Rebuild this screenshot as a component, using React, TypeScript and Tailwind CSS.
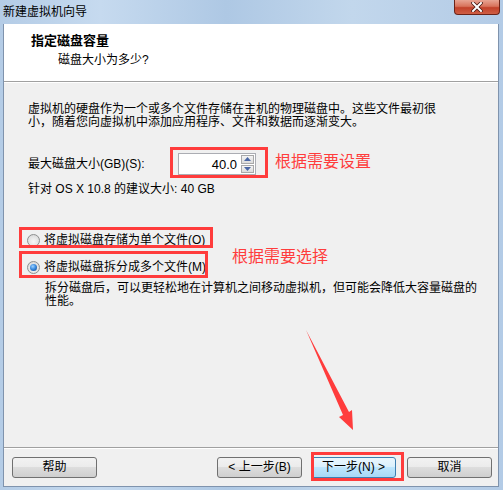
import React from "react";

const FONT = '"Liberation Sans", "Noto Sans CJK SC", sans-serif';

function Btn({ label, primary, className }: { label: string; primary?: boolean; className?: string }) {
  return (
    <div
      className={
        "h-[21px] w-[85px] rounded-[3px] border flex items-center justify-center text-[12px] leading-[13px] text-black " +
        (primary
          ? "border-[#3c7fb1] bg-[linear-gradient(to_bottom,#eaf6fd_0%,#d9f0fc_50%,#bee6fd_50%,#a7d9f5_100%)] "
          : "border-[#707070] bg-[linear-gradient(to_bottom,#f2f2f2_0%,#ebebeb_50%,#dddddd_50%,#cfcfcf_100%)] ") +
        (className ?? "")
      }
    >
      {label}
    </div>
  );
}

function Radio({ checked }: { checked?: boolean }) {
  return (
    <div className="w-[13px] h-[13px] rounded-full border border-[#8e8f8f] bg-[radial-gradient(circle_at_50%_60%,#f8f8f8_0%,#e2e2e2_60%,#cfcfcf_100%)] flex items-center justify-center shrink-0">
      {checked && (
        <div className="w-[7px] h-[7px] rounded-full bg-[radial-gradient(circle_at_40%_35%,#9fd2ff_0%,#3c8ce0_45%,#0d3d82_100%)]" />
      )}
    </div>
  );
}

export default function App() {
  return (
    <div
      className="relative w-[503px] h-[490px] overflow-hidden flex flex-col bg-[linear-gradient(to_right,#b4cce6,#c6daef_20%,#aec8e4_45%,#c2d7ec_70%,#b3cbe6)]"
      style={{ fontFamily: FONT }}
    >
      {/* Title bar */}
      <div className="h-[24px] flex items-start shrink-0">
        <div className="pl-[3px] pt-[5px] text-[12px] leading-[14px] text-black">新建虚拟机向导</div>
        <div className="ml-auto mr-[3px] w-[46px] h-[15px] rounded-b-[4px] border border-t-0 border-[#6b2318] bg-[linear-gradient(to_bottom,#e8a493_0%,#d8735c_45%,#c2412a_55%,#cf5f45_100%)] flex items-center justify-center">
          <svg width="12" height="10" viewBox="0 0 12 10">
            <path d="M2 1 L10 9 M10 1 L2 9" stroke="#4a1a12" strokeWidth="3.6" strokeLinecap="square" />
            <path d="M2 1 L10 9 M10 1 L2 9" stroke="#ffffff" strokeWidth="2" strokeLinecap="square" />
          </svg>
        </div>
      </div>

      {/* Client area */}
      <div className="flex-1 flex flex-col ml-[3px] mr-[4px] mb-[3px] border-l border-r border-[#7f93ad]">
        {/* Header */}
        <div className="h-[57px] bg-white pl-[27px] pt-[9px] shrink-0">
          <div className="text-[13px] leading-[16px] font-bold text-black">指定磁盘容量</div>
          <div className="mt-[3px] ml-[27px] text-[12px] leading-[16px] text-black">磁盘大小为多少?</div>
        </div>
        <div className="h-px bg-[#a0a0a0] shrink-0" />
        <div className="h-px bg-white shrink-0" />

        {/* Body */}
        <div className="flex-1 bg-[#f0f0f0] pl-[24px] pt-[20px] text-[12px] leading-[13px] text-black">
          <div>
            虚拟机的硬盘作为一个或多个文件存储在主机的物理磁盘中。这些文件最初很
            <br />
            小，随着您向虚拟机中添加应用程序、文件和数据而逐渐变大。
          </div>

          <div className="mt-[24px] flex items-center h-[22px]">
            <div className="w-[150px]">最大磁盘大小(GB)(S):</div>
            <div className="flex h-[22px]">
              <div className="w-[62px] h-[22px] bg-white border border-[#abadb3] border-r-0 flex items-center justify-end pr-[3px] text-[13px]">
                40.0
              </div>
              <div className="w-[16px] h-[22px] flex flex-col bg-white border border-[#abadb3] border-l-0">
                <div className="flex-1 m-[1px] mb-0 border border-[#a9a9a9] bg-[linear-gradient(to_bottom,#f4f4f4,#dcdcdc)] flex items-center justify-center">
                  <svg width="7" height="4" viewBox="0 0 7 4"><path d="M0 4 L3.5 0 L7 4 Z" fill="#4b67a4" /></svg>
                </div>
                <div className="flex-1 m-[1px] border border-[#a9a9a9] bg-[linear-gradient(to_bottom,#f4f4f4,#dcdcdc)] flex items-center justify-center">
                  <svg width="7" height="4" viewBox="0 0 7 4"><path d="M0 0 L7 0 L3.5 4 Z" fill="#4b67a4" /></svg>
                </div>
              </div>
            </div>
          </div>

          <div className="mt-[8px]">针对 OS X 10.8 的建议大小: 40 GB</div>

          <div className="mt-[37px] ml-[-1px] flex items-center gap-[4px] h-[15px]">
            <Radio />
            <span>将虚拟磁盘存储为单个文件(O)</span>
          </div>
          <div className="mt-[12px] ml-[-1px] flex items-center gap-[4px] h-[15px]">
            <Radio checked />
            <span>将虚拟磁盘拆分成多个文件(M)</span>
          </div>
          <div className="mt-[7px] ml-[17px]">
            拆分磁盘后，可以更轻松地在计算机之间移动虚拟机，但可能会降低大容量磁盘的
            <br />
            性能。
          </div>
        </div>

        <div className="h-px bg-[#a0a0a0] shrink-0" />
        <div className="h-px bg-white shrink-0" />

        {/* Footer */}
        <div className="h-[38px] bg-[#f0f0f0] flex items-start pt-[8px] shrink-0 border-b border-[#7f93ad]">
          <Btn label="帮助" className="ml-[8px]" />
          <Btn label="< 上一步(B)" className="ml-[120px]" />
          <Btn label="下一步(N) >" primary className="ml-[9px]" />
          <Btn label="取消" className="ml-[11px]" />
        </div>
      </div>

      {/* Annotation overlays */}
      <div className="absolute left-[170px] top-[147px] w-[98px] h-[31px] border-[3px] border-[#ff3c3c]" />
      <div className="absolute left-[275px] top-[152px] text-[16px] leading-[20px] text-[#ff3c3c]">根据需要设置</div>
      <div className="absolute left-[19px] top-[227px] w-[194px] h-[21px] border-[3px] border-[#ff3c3c]" />
      <div className="absolute left-[19px] top-[251px] w-[189px] h-[27px] border-[3px] border-[#ff3c3c]" />
      <div className="absolute left-[232px] top-[247px] text-[16px] leading-[20px] text-[#ff3c3c]">根据需要选择</div>
      <div className="absolute left-[311px] top-[452px] w-[93px] h-[29px] border-[3px] border-[#ff3c3c]" />
      <svg className="absolute left-0 top-0 pointer-events-none" width="503" height="490" viewBox="0 0 503 490">
        <path d="M306 330 L349 412 L352 410 L353 430 L339 417 L343 415 Z" fill="#ff3c3c" />
      </svg>
    </div>
  );
}
